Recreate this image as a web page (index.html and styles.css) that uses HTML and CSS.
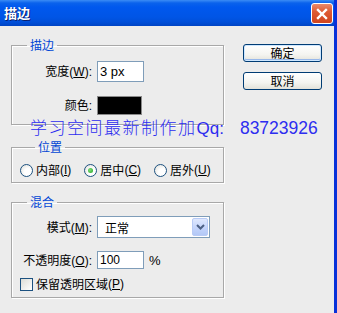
FILE: index.html
```html
<!DOCTYPE html>
<html lang="zh-CN">
<head>
  <meta charset="UTF-8">
  <title>描边</title>
  <link rel="stylesheet" href="styles.css">
</head>
<body>
  <div class="window">

    <!-- Title bar -->
    <div class="titlebar">
      <span class="title">描边</span>
      <button class="close" aria-label="关闭">
        <svg width="12" height="12" viewBox="0 0 12 12">
          <path d="M2 2 L10 10 M10 2 L2 10" stroke="#fff" stroke-width="2.4" stroke-linecap="square"/>
        </svg>
      </button>
    </div>

    <div class="content">
      <div class="groups">

        <!-- Stroke -->
        <fieldset class="group group-stroke">
          <legend>描边</legend>
          <div class="form-grid">
            <label class="field-label" for="width">宽度<span class="key">(<u>W</u>):</span></label>
            <input class="text-input width-input" id="width" type="text" value="3 px">
            <span class="field-label">颜色<span class="key">:</span></span>
            <span class="swatch"></span>
          </div>
        </fieldset>

        <!-- Position -->
        <fieldset class="group group-position">
          <legend>位置</legend>
          <div class="radio-row">
            <label class="option"><span class="radio"></span>内部<span class="key">(<u>I</u>)</span></label>
            <label class="option"><span class="radio checked"></span>居中<span class="key">(<u>C</u>)</span></label>
            <label class="option"><span class="radio"></span>居外<span class="key">(<u>U</u>)</span></label>
          </div>
        </fieldset>

        <!-- Blending -->
        <fieldset class="group group-blend">
          <legend>混合</legend>
          <div class="form-grid blend-grid">
            <span class="field-label">模式<span class="key">(<u>M</u>):</span></span>
            <div class="select">
              <span class="select-value">正常</span>
              <span class="select-arrow">
                <svg width="9" height="6" viewBox="0 0 9 6">
                  <path d="M1 1 L4.5 4.5 L8 1" fill="none" stroke="#4d6185" stroke-width="2"/>
                </svg>
              </span>
            </div>
            <span class="field-label">不透明度<span class="key">(<u>O</u>):</span></span>
            <div class="opacity-field">
              <input class="text-input opacity-input" type="text" value="100">
              <span class="unit">%</span>
            </div>
          </div>
          <label class="option check-row"><span class="checkbox"></span>保留透明区域<span class="key">(<u>P</u>)</span></label>
        </fieldset>

      </div>

      <div class="actions">
        <button class="btn btn-default">确定</button>
        <button class="btn">取消</button>
      </div>

      <!-- Watermark over the dialog -->
      <div class="watermark"><span class="wm-cn">学习空间最新制作加</span><span class="wm-latin">Qq:</span><span class="qq">83723926</span></div>
    </div>
  </div>
</body>
</html>
```

FILE: styles.css
```css
html, body {
  margin: 0;
  background: #ececec;
}

body {
  font-family: "Noto Sans CJK SC", sans-serif;
  font-size: 12px;
  color: #000;
}

.window {
  width: 334px;
  height: 313px;
  border-right: 3px solid #0831d9;
  display: flex;
  flex-direction: column;
  background: #ececec;
}

/* Title bar */
.titlebar {
  height: 26px;
  flex: none;
  display: flex;
  align-items: center;
  justify-content: space-between;
  padding: 0 1px 0 4px;
  background: linear-gradient(to bottom, #3b8cf5 0, #0a62ec 3px, #0058ee 7px, #0055e6 17px, #004fd9 22px, #0044c4 26px);
}

.title {
  color: #fff;
  font-weight: bold;
  font-size: 13px;
  line-height: 14px;
  text-shadow: 1px 1px 0 #0a1f6e;
}

.close {
  width: 22px;
  height: 21px;
  margin-top: 1px;
  padding: 0;
  border: 1px solid #fff;
  border-radius: 3px;
  background: linear-gradient(to bottom, #ea8a6c 0, #de5b34 40%, #d0441d 100%);
  display: flex;
  align-items: center;
  justify-content: center;
}

/* Body */
.content {
  position: relative;
  flex: 1;
  display: flex;
  padding-left: 11px;
}

.groups {
  width: 213px;
  display: flex;
  flex-direction: column;
}

.group {
  margin: 0;
  padding: 0;
  border: 1px solid #a8a8a8;
  box-shadow: inset 1px 1px 0 #fff, 1px 1px 0 #fff;
  min-width: 0;
}

.group legend {
  margin-left: 15px;
  padding: 0 3px;
  color: #0046d5;
  font-size: 12px;
  line-height: 14px;
}

.group-stroke {
  margin-top: 12px;
  padding: 9px 0 9px 0;
}

.group-position {
  margin-top: 15px;
  padding: 8px 0 4px 8px;
}

.group-blend {
  margin-top: 12px;
  padding: 7px 0 5px 0;
}

.form-grid {
  display: grid;
  grid-template-columns: 80px auto;
  column-gap: 5px;
  row-gap: 14px;
  align-items: center;
}

.blend-grid {
  row-gap: 13px;
}

.field-label {
  text-align: right;
  white-space: nowrap;
  line-height: 16px;
}

/* latin access-key parts of labels */
.key {
  font-family: "Liberation Sans", sans-serif;
}

.text-input {
  box-sizing: border-box;
  border: 1px solid #7f9db9;
  background: #fff;
  font-family: "Liberation Sans", sans-serif;
  font-size: 13px;
  padding: 0 2px;
  margin: 0;
  outline: none;
}

.width-input {
  width: 47px;
  height: 21px;
}

.swatch {
  width: 45px;
  height: 19px;
  box-sizing: border-box;
  border: 1px solid #8a8a8a;
  background: #000;
}

/* Radios & checkbox */
.radio-row {
  display: flex;
  gap: 13px;
}

.option {
  display: flex;
  align-items: center;
  line-height: 16px;
  white-space: nowrap;
}

.radio {
  width: 13px;
  height: 13px;
  margin-right: 3px;
  box-sizing: border-box;
  border: 1px solid #1c5180;
  border-radius: 50%;
  background: radial-gradient(circle at 65% 65%, #fff 0, #fff 35%, #dcdcd6 100%);
  display: flex;
  align-items: center;
  justify-content: center;
}

.radio.checked::after {
  content: "";
  width: 5px;
  height: 5px;
  border-radius: 50%;
  background: radial-gradient(circle at 40% 40%, #7ee07a 0, #21a121 100%);
}

.check-row {
  margin: 7px 0 0 8px;
}

.checkbox {
  width: 13px;
  height: 13px;
  margin-right: 3px;
  box-sizing: border-box;
  border: 1px solid #1c5180;
  background: linear-gradient(135deg, #dcdcd6 0, #fff 100%);
}

/* Select */
.select {
  width: 113px;
  height: 22px;
  box-sizing: border-box;
  border: 1px solid #7f9db9;
  background: #fff;
  display: flex;
  align-items: center;
  justify-content: space-between;
  padding: 1px;
}

.select-value {
  padding-left: 6px;
}

.select-arrow {
  width: 16px;
  height: 18px;
  box-sizing: border-box;
  border: 1px solid #b8cbf6;
  border-radius: 2px;
  background: linear-gradient(to bottom, #dfe8fe 0, #c2d3fb 60%, #b3c8f6 100%);
  display: flex;
  align-items: center;
  justify-content: center;
}

.opacity-field {
  display: flex;
  align-items: center;
  gap: 5px;
}

.opacity-input {
  width: 47px;
  height: 18px;
  font-size: 12px;
}

.unit {
  font-family: "Liberation Sans", sans-serif;
  font-size: 13px;
}

/* Buttons */
.actions {
  margin-left: 19px;
  padding-top: 18px;
  display: flex;
  flex-direction: column;
  gap: 10px;
}

.btn {
  width: 79px;
  height: 18px;
  padding: 0;
  border: 1px solid #003c74;
  border-radius: 3px;
  background: linear-gradient(to bottom, #fff 0, #f4f4f0 60%, #e3e2da 100%);
  font-family: "Noto Sans CJK SC", sans-serif;
  font-size: 12px;
  line-height: 14px;
  color: #000;
}

.btn-default {
  box-shadow: inset 0 0 0 1px #cee7ff, inset 0 -1px 0 1px #98b8ea;
}

/* Watermark */
.watermark {
  position: absolute;
  left: 30px;
  top: 92px;
  color: #2d2df0;
  font-size: 17px;
  line-height: 17px;
  white-space: nowrap;
  display: flex;
  align-items: baseline;
}

.wm-cn {
  font-weight: 300;
  letter-spacing: 1.5px;
}

.wm-latin {
  font-family: "Liberation Sans", sans-serif;
}

.qq {
  margin-left: 16px;
  font-family: "Liberation Sans", sans-serif;
  font-size: 17.5px;
}
```
